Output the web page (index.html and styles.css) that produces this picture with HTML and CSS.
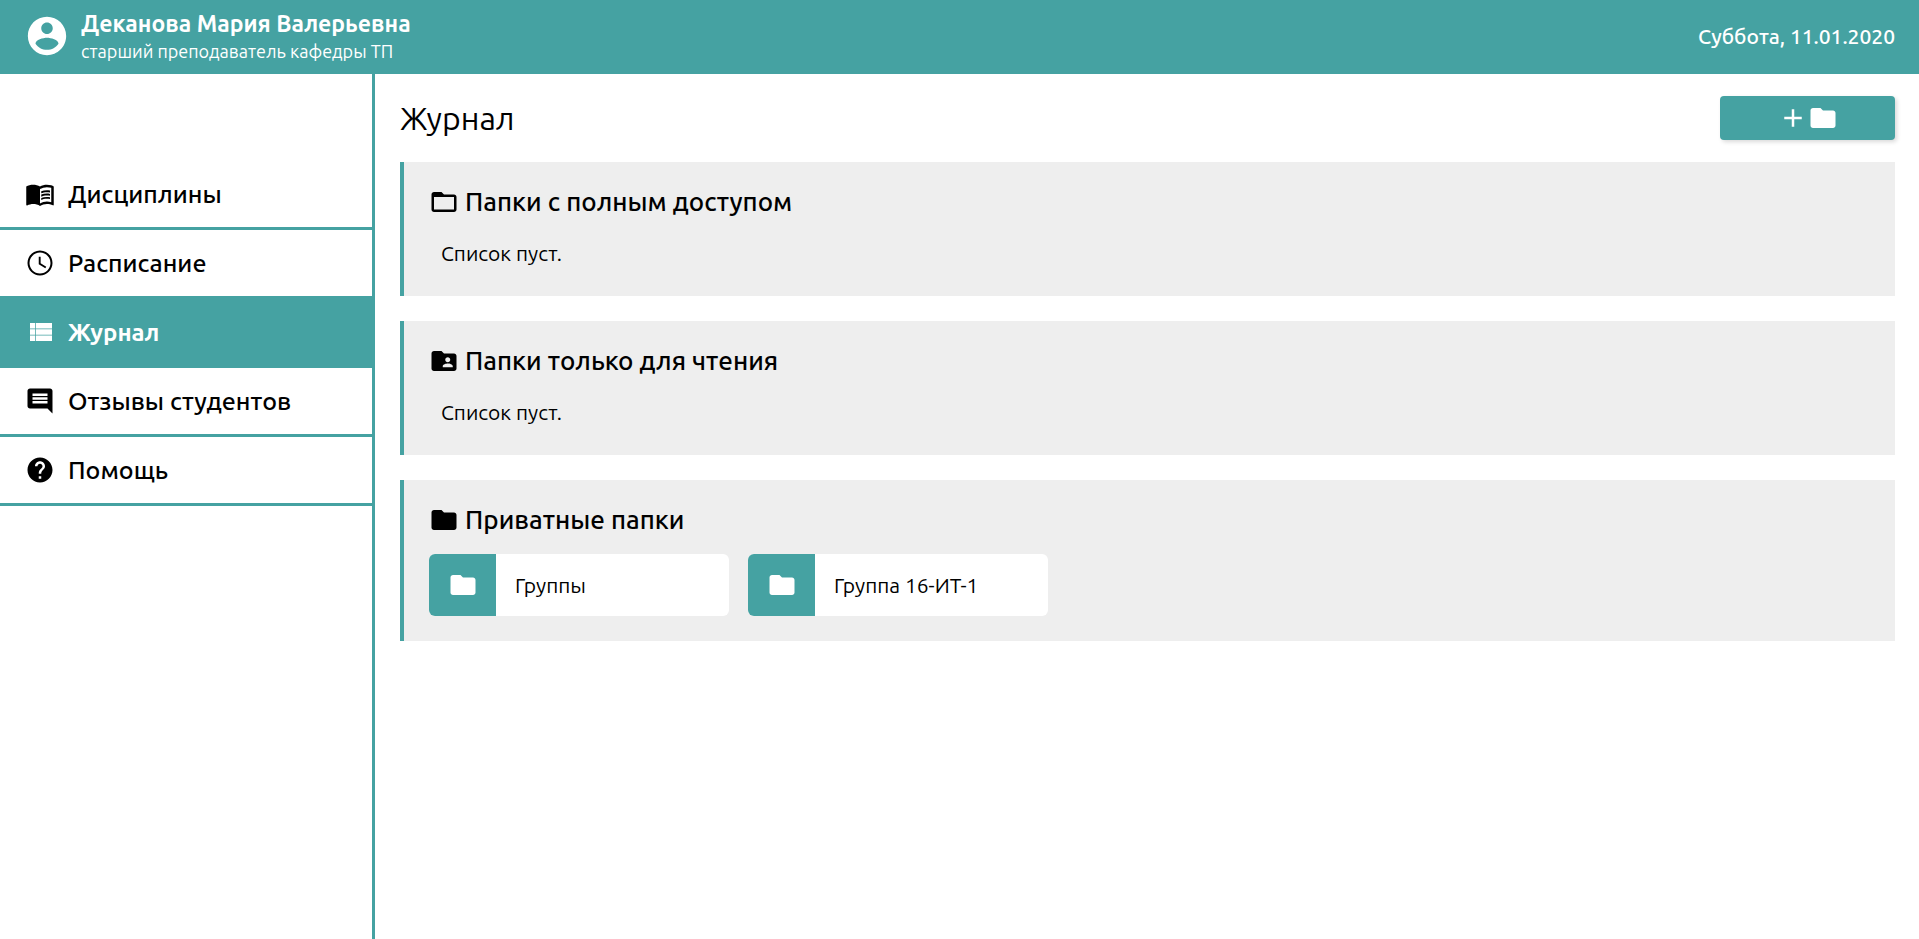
FILE: index.html
```html
<!DOCTYPE html>
<html lang="ru">
<head>
<meta charset="utf-8">
<title>Журнал</title>
<link rel="stylesheet" href="styles.css">
</head>
<body>
<svg class="sprite" aria-hidden="true">
  <symbol id="folder" viewBox="0 0 24 24"><path d="M10 4H4c-1.1 0-1.99.9-1.99 2L2 18c0 1.1.9 2 2 2h16c1.1 0 2-.9 2-2V8c0-1.1-.9-2-2-2h-8l-2-2z"/></symbol>
  <symbol id="folder-open" viewBox="0 0 24 24"><path d="M20 6h-8l-2-2H4c-1.1 0-1.99.9-1.99 2L2 18c0 1.1.9 2 2 2h16c1.1 0 2-.9 2-2V8c0-1.1-.9-2-2-2zm0 12H4V8h16v10z"/></symbol>
  <symbol id="folder-shared" viewBox="0 0 24 24"><path d="M20 6h-8l-2-2H4c-1.1 0-1.99.9-1.99 2L2 18c0 1.1.9 2 2 2h16c1.1 0 2-.9 2-2V8c0-1.1-.9-2-2-2zm-5 3c1.1 0 2 .9 2 2s-.9 2-2 2-2-.9-2-2 .9-2 2-2zm4 8h-8v-1c0-1.330 2.670-2 4-2s4 .67 4 2v1z"/></symbol>
  <symbol id="plus" viewBox="0 0 24 24"><path d="M19 13h-6v6h-2v-6H5v-2h6V5h2v6h6v2z"/></symbol>
  <symbol id="account" viewBox="0 0 24 24"><path d="M12 2C6.480 2 2 6.480 2 12s4.480 10 10 10 10-4.480 10-10S17.520 2 12 2zm0 3c1.660 0 3 1.340 3 3s-1.340 3-3 3-3-1.340-3-3 1.340-3 3-3zm0 14.200c-2.500 0-4.710-1.280-6-3.220.03-1.990 4-3.080 6-3.080 1.990 0 5.970 1.090 6 3.080-1.290 1.940-3.500 3.220-6 3.220z"/></symbol>
  <symbol id="book" viewBox="0 0 24 24"><path d="M21 5c-1.110-.35-2.330-.5-3.500-.5-1.950 0-4.050.4-5.500 1.500-1.450-1.100-3.550-1.500-5.500-1.500S2.450 4.900 1 6v14.650c0 .25.25.5.5.5.1 0 .15-.05.25-.05C3.100 20.450 5.050 20 6.500 20c1.950 0 4.050.4 5.500 1.500 1.350-.85 3.800-1.500 5.500-1.500 1.650 0 3.350.3 4.750 1.050.1.050.15.050.25.050.25 0 .5-.25.5-.5V6c-.6-.45-1.250-.75-2-1zm0 13.500c-1.100-.35-2.300-.5-3.500-.5-1.700 0-4.150.65-5.500 1.500V8c1.350-.85 3.800-1.500 5.500-1.500 1.200 0 2.400.15 3.500.5v11.500z"/><path d="M17.500 10.500c.88 0 1.730.09 2.500.26V9.240c-.79-.15-1.640-.24-2.500-.24-1.700 0-3.240.29-4.500.83v1.660c1.130-.64 2.700-.99 4.500-.99zM13 12.490v1.660c1.130-.64 2.700-.99 4.500-.99.88 0 1.730.09 2.500.26V11.900c-.79-.15-1.640-.24-2.500-.24-1.700 0-3.240.3-4.500.83zM17.500 14.330c-1.700 0-3.240.29-4.500.83v1.660c1.130-.64 2.700-.99 4.500-.99.88 0 1.730.09 2.500.26v-1.520c-.79-.16-1.640-.24-2.500-.24z"/></symbol>
  <symbol id="clock" viewBox="0 0 24 24"><path d="M11.990 2C6.470 2 2 6.480 2 12s4.470 10 9.990 10C17.520 22 22 17.520 22 12S17.520 2 11.990 2zM12 20.400c-4.640 0-8.400-3.760-8.400-8.400S7.360 3.600 12 3.600s8.400 3.760 8.400 8.400-3.760 8.400-8.400 8.400z"/><path d="M12.500 7H11v6l5.250 3.150.75-1.230-4.500-2.670z"/></symbol>
  <symbol id="list" viewBox="0 0 24 24"><path d="M4 4.800h4v4.300H4zM8.600 4.800h13v4.300h-13zM4 9.700h4v4.400H4zM8.600 9.700h13v4.400h-13zM4 14.700h4v4.500H4zM8.600 14.700h13v4.500h-13z"/></symbol>
  <symbol id="comment" viewBox="0 0 24 24"><path d="M21.990 4c0-1.100-.89-2-1.990-2H4c-1.100 0-2 .9-2 2v12c0 1.100.9 2 2 2h14l4 4-.01-18zM18 14H6v-2h12v2zm0-3H6V9h12v2zm0-3H6V6h12v2z"/></symbol>
  <symbol id="help" viewBox="0 0 24 24"><path d="M12 2C6.480 2 2 6.480 2 12s4.480 10 10 10 10-4.480 10-10S17.520 2 12 2zm1 17h-2v-2h2v2zm2.070-7.750l-.9.920C13.450 12.900 13 13.500 13 15h-2v-.5c0-1.100.45-2.100 1.170-2.830l1.240-1.260c.37-.36.59-.86.59-1.410 0-1.100-.9-2-2-2s-2 .9-2 2H8c0-2.210 1.790-4 4-4s4 1.790 4 4c0 .88-.36 1.680-.93 2.250z"/></symbol>
</svg>

<header class="topbar">
  <svg class="avatar" aria-hidden="true"><use href="#account"/></svg>
  <div class="user">
    <strong class="user-name">Деканова Мария Валерьевна</strong>
    <span class="user-role">старший преподаватель кафедры ТП</span>
  </div>
  <time class="today" datetime="2020-01-11">Суббота, 11.01.2020</time>
</header>

<div class="layout">
  <nav class="sidebar">
    <a class="nav-item" href="#subjects"><svg class="icon" aria-hidden="true"><use href="#book"/></svg>Дисциплины</a>
    <a class="nav-item" href="#schedule"><svg class="icon" aria-hidden="true"><use href="#clock"/></svg>Расписание</a>
    <a class="nav-item active" href="#journal" aria-current="page"><svg class="icon" aria-hidden="true"><use href="#list"/></svg>Журнал</a>
    <a class="nav-item" href="#reviews"><svg class="icon" aria-hidden="true"><use href="#comment"/></svg>Отзывы студентов</a>
    <a class="nav-item" href="#support"><svg class="icon" aria-hidden="true"><use href="#help"/></svg>Помощь</a>
  </nav>

  <main class="content">
    <div class="content-head">
      <h1 class="title">Журнал</h1>
      <button class="add" type="button" aria-label="Добавить папку"><svg class="icon" aria-hidden="true"><use href="#plus"/></svg><svg class="icon" aria-hidden="true"><use href="#folder"/></svg></button>
    </div>

    <section class="panel">
      <h2 class="panel-title"><svg class="icon" aria-hidden="true"><use href="#folder-open"/></svg>Папки с полным доступом</h2>
      <p class="empty">Список пуст.</p>
    </section>

    <section class="panel">
      <h2 class="panel-title"><svg class="icon" aria-hidden="true"><use href="#folder-shared"/></svg>Папки только для чтения</h2>
      <p class="empty">Список пуст.</p>
    </section>

    <section class="panel">
      <h2 class="panel-title"><svg class="icon" aria-hidden="true"><use href="#folder"/></svg>Приватные папки</h2>
      <div class="folders">
        <a class="folder" href="#groups"><span class="folder-mark"><svg class="icon" aria-hidden="true"><use href="#folder"/></svg></span><span class="folder-name">Группы</span></a>
        <a class="folder" href="#group-16"><span class="folder-mark"><svg class="icon" aria-hidden="true"><use href="#folder"/></svg></span><span class="folder-name">Группа 16-ИТ-1</span></a>
      </div>
    </section>
  </main>
</div>
</body>
</html>
```

FILE: styles.css
```css
:root {
  --accent: #45a2a2;
  --panel: #eeeeee;
}

* {
  box-sizing: border-box;
}

body {
  margin: 0;
  min-height: 100vh;
  display: flex;
  flex-direction: column;
  background: #fff;
  color: #000;
  font-family: Ubuntu, "Noto Sans", "Open Sans", sans-serif;
  font-size: 21px;
}

a {
  color: inherit;
  text-decoration: none;
}

.sprite {
  display: none;
}

.icon {
  width: 30px;
  height: 30px;
  flex: none;
  fill: currentColor;
}

.topbar {
  display: flex;
  align-items: center;
  gap: 11px;
  min-height: 74px;
  padding: 0 24px 2px;
  background: var(--accent);
  color: #fff;
}

.avatar {
  width: 46px;
  height: 46px;
  flex: none;
  fill: currentColor;
}

.user {
  display: flex;
  flex-direction: column;
  padding-top: 2px;
}

.user-name {
  font-size: 23px;
  line-height: 28px;
  font-weight: 600;
}

.user-role {
  font-size: 18px;
  line-height: 26px;
  font-weight: 400;
}

.today {
  margin-left: auto;
  font-weight: 500;
}

.layout {
  flex: 1;
  display: flex;
}

.sidebar {
  width: 375px;
  flex: none;
  padding-top: 87px;
  border-right: 3px solid var(--accent);
}

.nav-item {
  display: flex;
  align-items: center;
  gap: 13px;
  height: 69px;
  padding-left: 25px;
  border-bottom: 3px solid var(--accent);
  font-size: 25px;
  font-weight: 500;
}

.nav-item.active {
  background: var(--accent);
  color: #fff;
  font-size: 24px;
  font-weight: 600;
}

.content {
  flex: 1;
  min-width: 0;
  display: flex;
  flex-direction: column;
  gap: 25px;
  padding: 22px 24px 25px 25px;
}

.content-head {
  display: flex;
  align-items: center;
  justify-content: space-between;
  margin-bottom: -3px;
}

.title {
  margin: 0;
  font-size: 32px;
  line-height: 44px;
  font-weight: 400;
}

.add {
  display: flex;
  align-items: center;
  justify-content: center;
  width: 175px;
  height: 44px;
  padding: 0;
  border: 0;
  border-radius: 4px;
  background: var(--accent);
  color: #fff;
  box-shadow: 2px 2px 4px rgba(0, 0, 0, 0.15);
  cursor: pointer;
}

.panel {
  display: flex;
  flex-direction: column;
  gap: 19px;
  padding: 25px;
  border-left: 4px solid var(--accent);
  background: var(--panel);
}

.panel-title {
  display: flex;
  align-items: center;
  gap: 6px;
  margin: 0;
  font-size: 26px;
  line-height: 30px;
  font-weight: 500;
}

.empty {
  margin: 0;
  padding-left: 12px;
  line-height: 35px;
}

.folders {
  display: flex;
  flex-wrap: wrap;
  gap: 19px;
}

.folder {
  display: flex;
  width: 300px;
  height: 62px;
  overflow: hidden;
  border-radius: 6px;
  background: #fff;
}

.folder-mark {
  display: flex;
  align-items: center;
  justify-content: center;
  width: 67px;
  background: var(--accent);
  color: #fff;
}

.folder-name {
  align-self: center;
  padding-left: 19px;
}
```
